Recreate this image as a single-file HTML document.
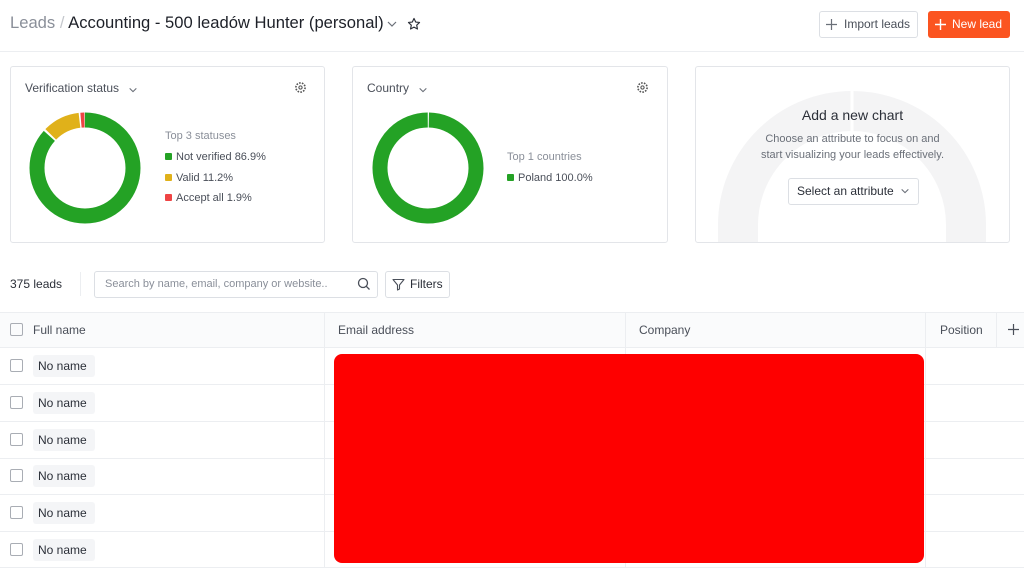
<!DOCTYPE html>
<html><head><meta charset="utf-8"><style>
*{box-sizing:border-box;margin:0;padding:0}
body{width:1024px;height:568px;overflow:hidden;background:#fff;font-family:"Liberation Sans",sans-serif;color:#2b2f38;position:relative}
.a{position:absolute}
.card{position:absolute;top:66px;height:177px;border:1px solid #e3e5e9;border-radius:3px;background:#fff}
.ct{position:absolute;left:14px;top:14px;font-size:12px;color:#4a4f59}
.leg{font-size:11px;color:#4a4f59;position:absolute}
.dot{display:inline-block;width:7px;height:7px;border-radius:1px;margin-right:4px;vertical-align:0}
.btn{position:absolute;border:1px solid #dcdfe4;border-radius:3px;font-size:12px;background:#fff}
.cb{position:absolute;left:10px;width:13px;height:13px;border:1.5px solid #a9adb4;border-radius:2px}
.chip{position:absolute;left:33px;width:62px;height:22px;background:#f4f5f7;border-radius:3px;font-size:12px;line-height:22px;padding-left:5px;color:#2b2f38}
.hl{position:absolute;left:0;width:1024px;height:1px;background:#eceef1}
.vl{position:absolute;width:1px;background:#eceef1}
.th{position:absolute;top:323px;font-size:12px;color:#4a4f59}
</style></head><body>
<div class="a" style="left:10px;top:13px;font-size:16.6px;white-space:nowrap"><span style="color:#8a8f99">Leads</span> <span style="color:#c4c7cc">/</span> <span style="color:#1d2028">Accounting - 500 leadów Hunter (personal)</span></div>
<svg class="a" style="left:386px;top:18px" width="12" height="12" viewBox="0 0 12 12"><path d="M2 4l4 4 4-4" fill="none" stroke="#6b7079" stroke-width="1.2"/></svg>
<svg class="a" style="left:407px;top:17px" width="14" height="14" viewBox="0 0 24 24"><path d="M12 2.5l2.9 6.1 6.6.8-4.9 4.6 1.3 6.6L12 17.3l-5.9 3.3 1.3-6.6-4.9-4.6 6.6-.8z" fill="none" stroke="#2b2f38" stroke-width="2" stroke-linejoin="round"/></svg>
<div class="btn" style="left:819px;top:11px;width:99px;height:27px;line-height:25px;padding-left:24px;color:#4a4f59">Import leads</div>
<svg class="a" style="left:826px;top:19px" width="11" height="11" viewBox="0 0 11 11"><path d="M5.5 0v11M0 5.5h11" stroke="#6b7079" stroke-width="1.2"/></svg>
<div class="a" style="left:928px;top:11px;width:82px;height:27px;background:#fb5420;border-radius:3px;color:#fff;font-size:12px;line-height:27px;padding-left:24px">New lead</div>
<svg class="a" style="left:935px;top:19px" width="11" height="11" viewBox="0 0 11 11"><path d="M5.5 0v11M0 5.5h11" stroke="#fff" stroke-width="1.4"/></svg>
<div class="hl" style="top:51px"></div>

<div class="card" style="left:10px;width:315px">
<div class="ct">Verification status</div>
<svg class="a" style="left:117px;top:18px" width="10" height="10" viewBox="0 0 12 12"><path d="M2 4l4 4 4-4" fill="none" stroke="#6b7079" stroke-width="1.3"/></svg>
<svg class="a" style="right:17px;top:14px" width="13" height="13" viewBox="0 0 24 24"><circle cx="12" cy="12" r="3" fill="none" stroke="#555" stroke-width="2"/><circle cx="12" cy="12" r="8.5" fill="none" stroke="#555" stroke-width="3" stroke-dasharray="3 2.3"/></svg>
<svg class="a" style="left:18px;top:45px" width="112" height="112" viewBox="0 0 112 112"><g transform="rotate(-90 56 56)">
<circle cx="56" cy="56" r="48" fill="none" stroke="#24a225" stroke-width="15" stroke-dasharray="261 40"/>
<circle cx="56" cy="56" r="48" fill="none" stroke="#e0b11a" stroke-width="15" stroke-dasharray="0 263 32.5 10"/>
<circle cx="56" cy="56" r="48" fill="none" stroke="#ef4444" stroke-width="15" stroke-dasharray="0 297 3.5 10"/></g></svg>
<div class="leg" style="left:154px;top:63px;color:#8a8f99">Top 3 statuses</div>
<div class="leg" style="left:154px;top:84px"><span class="dot" style="background:#24a225"></span>Not verified 86.9%</div>
<div class="leg" style="left:154px;top:105px"><span class="dot" style="background:#e0b11a"></span>Valid 11.2%</div>
<div class="leg" style="left:154px;top:125px"><span class="dot" style="background:#ef4444"></span>Accept all 1.9%</div>
</div>

<div class="card" style="left:352px;width:316px">
<div class="ct">Country</div>
<svg class="a" style="left:65px;top:18px" width="10" height="10" viewBox="0 0 12 12"><path d="M2 4l4 4 4-4" fill="none" stroke="#6b7079" stroke-width="1.3"/></svg>
<svg class="a" style="right:18px;top:14px" width="13" height="13" viewBox="0 0 24 24"><circle cx="12" cy="12" r="3" fill="none" stroke="#555" stroke-width="2"/><circle cx="12" cy="12" r="8.5" fill="none" stroke="#555" stroke-width="3" stroke-dasharray="3 2.3"/></svg>
<svg class="a" style="left:19px;top:45px" width="112" height="112" viewBox="0 0 112 112"><g transform="rotate(-89 56 56)"><circle cx="56" cy="56" r="48" fill="none" stroke="#24a225" stroke-width="15" stroke-dasharray="300 2"/></g></svg>
<div class="leg" style="left:154px;top:84px;color:#8a8f99">Top 1 countries</div>
<div class="leg" style="left:154px;top:105px"><span class="dot" style="background:#24a225"></span>Poland 100.0%</div>
</div>

<div class="card" style="left:695px;width:315px;overflow:hidden">
<svg class="a" style="left:0;top:0" width="313" height="177" viewBox="0 0 313 177"><path d="M42 180V158A114 114 0 0 1 270 158V180" fill="none" stroke="#f4f4f5" stroke-width="40"/><line x1="156" y1="20" x2="156" y2="66" stroke="#fff" stroke-width="3"/></svg>
<div class="a" style="left:0;width:313px;top:40px;text-align:center;font-size:14px;color:#2b2f38">Add a new chart</div>
<div class="a" style="left:0;width:313px;top:64px;text-align:center;font-size:11px;line-height:16px;color:#6b7079">Choose an attribute to focus on and<br>start visualizing your leads effectively.</div>
<div class="btn" style="left:92px;top:111px;width:131px;height:27px;line-height:25px;padding-left:8px;color:#2b2f38">Select an attribute</div>
<svg class="a" style="left:204px;top:119px" width="10" height="10" viewBox="0 0 12 12"><path d="M2 4l4 4 4-4" fill="none" stroke="#6b7079" stroke-width="1.3"/></svg>
</div>

<div class="a" style="left:10px;top:277px;font-size:12px;color:#2b2f38">375 leads</div>
<div class="vl" style="left:80px;top:272px;height:24px"></div>
<div class="btn" style="left:94px;top:271px;width:284px;height:27px;line-height:25px;padding-left:10px;font-size:11px;color:#8a8f99">Search by name, email, company or website..</div>
<svg class="a" style="left:357px;top:277px" width="14" height="14" viewBox="0 0 14 14"><circle cx="6" cy="6" r="4.5" fill="none" stroke="#4a4f59" stroke-width="1.3"/><path d="M9.3 9.3L12.5 12.5" stroke="#4a4f59" stroke-width="1.3"/></svg>
<div class="btn" style="left:385px;top:271px;width:65px;height:27px;line-height:25px;padding-left:24px;color:#2b2f38">Filters</div>
<svg class="a" style="left:392px;top:278px" width="13" height="13" viewBox="0 0 13 13"><path d="M1 1.5h11L7.5 7v4L5.5 12V7z" fill="none" stroke="#4a4f59" stroke-width="1.1" stroke-linejoin="round"/></svg>

<div class="a" style="left:0;top:312px;width:1024px;height:35px;background:#fafbfc"></div>
<div class="hl" style="top:312px"></div>
<div class="hl" style="top:347px"></div>
<div class="hl" style="top:384px"></div>
<div class="hl" style="top:421px"></div>
<div class="hl" style="top:458px"></div>
<div class="hl" style="top:494px"></div>
<div class="hl" style="top:531px"></div>
<div class="hl" style="top:567px"></div>
<div class="vl" style="left:324px;top:312px;height:256px"></div>
<div class="vl" style="left:625px;top:312px;height:256px"></div>
<div class="vl" style="left:925px;top:312px;height:256px"></div>
<div class="vl" style="left:996px;top:312px;height:35px"></div>
<div class="cb" style="top:323px"></div>
<div class="th" style="left:33px">Full name</div>
<div class="th" style="left:338px">Email address</div>
<div class="th" style="left:639px">Company</div>
<div class="th" style="left:940px">Position</div>
<svg class="a" style="left:1008px;top:324px" width="11" height="11" viewBox="0 0 11 11"><path d="M5.5 0v11M0 5.5h11" stroke="#4a4f59" stroke-width="1.2"/></svg>

<div class="cb" style="top:359px"></div><div class="chip" style="top:355px">No name</div>
<div class="cb" style="top:396px"></div><div class="chip" style="top:392px">No name</div>
<div class="cb" style="top:433px"></div><div class="chip" style="top:429px">No name</div>
<div class="cb" style="top:469px"></div><div class="chip" style="top:465px">No name</div>
<div class="cb" style="top:506px"></div><div class="chip" style="top:502px">No name</div>
<div class="cb" style="top:543px"></div><div class="chip" style="top:539px">No name</div>

<div class="a" style="left:334px;top:354px;width:590px;height:209px;background:#fe0000;border-radius:8px"></div>
</body></html>
